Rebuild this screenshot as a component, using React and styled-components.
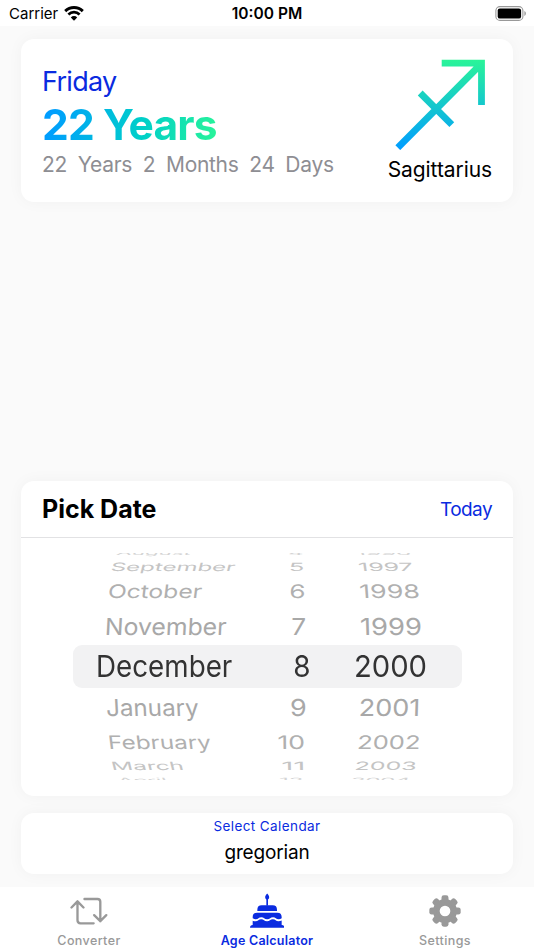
import React from "react";
import styled, { createGlobalStyle } from "styled-components";

const BLUE = "#0a2be0";

const GlobalStyle = createGlobalStyle`
  * { box-sizing: border-box; }
  body { margin: 0; background: #fafafa; }
`;

const Screen = styled.div`
  width: 534px;
  height: 950px;
  display: flex;
  flex-direction: column;
  overflow: hidden;
  background: #fafafa;
  color: #000;
  font-family: Inter, "Liberation Sans", sans-serif;
  white-space: nowrap;
`;

const StatusBar = styled.header`
  flex: none;
  height: 26px;
  padding: 2px 7px 0 9px;
  display: grid;
  grid-template-columns: 1fr auto 1fr;
  align-items: center;
  background: #fff;
  font-size: 15px;
  line-height: 24px;
`;

const Carrier = styled.div`
  display: flex;
  align-items: center;
  gap: 6px;
  svg { display: block; margin-top: -2px; }
`;

const Clock = styled.div`
  padding-right: 2px;
  font-size: 15.5px;
  font-weight: 600;
`;

const BatterySlot = styled.div`
  display: flex;
  justify-content: flex-end;
  svg { display: block; margin-top: -2px; }
`;

const Content = styled.main`
  flex: 1;
  min-height: 0;
  padding: 13px 21px 13px;
  display: flex;
  flex-direction: column;
`;

const Card = styled.section`
  flex: none;
  background: #fff;
  border-radius: 13px;
  box-shadow: 0 0 16px rgba(0, 0, 0, 0.04);
`;

const AgeCard = styled(Card)`
  height: 163px;
  padding: 20px 21px 0;
  display: flex;
  justify-content: space-between;
`;

const AgeInfo = styled.div`
  padding-top: 5px;
`;

const Weekday = styled.div`
  font-size: 27px;
  line-height: 36px;
  letter-spacing: -0.7px;
  color: ${BLUE};
`;

const AgeYears = styled.div`
  width: max-content;
  font-size: 42.5px;
  font-weight: 700;
  line-height: 50px;
  letter-spacing: -0.85px;
  color: transparent;
  background: linear-gradient(100deg, #009dff 5%, #00d0c8 58%, #2af598 100%);
  background-clip: text;
  -webkit-background-clip: text;
`;

const AgeDetail = styled.div`
  display: flex;
  gap: 10.7px;
  font-size: 21px;
  line-height: 30px;
  letter-spacing: -0.3px;
  color: #8e8e93;
`;

const Zodiac = styled.div`
  display: flex;
  flex-direction: column;
  align-items: center;
  svg { display: block; margin-left: 1px; }
`;

const ZodiacName = styled.div`
  font-size: 21px;
  line-height: 39px;
  letter-spacing: -0.08px;
`;

const PickerCard = styled(Card)`
  margin-top: auto;
  height: 315.5px;
`;

const PickerHeader = styled.div`
  height: 57px;
  padding: 1px 21px 0;
  display: flex;
  align-items: center;
  justify-content: space-between;
  border-bottom: 1px solid #e2e2e4;
`;

const PickerTitle = styled.h2`
  margin: 0;
  font-size: 25px;
  font-weight: 700;
`;

const TodayButton = styled.button`
  border: 0;
  padding: 1px 0 0;
  background: none;
  font: 400 19px Inter, sans-serif;
  letter-spacing: -0.6px;
  color: ${BLUE};
`;

const Wheel = styled.div`
  width: 389px;
  height: 227.5px;
  margin: 15px 0 0 51.5px;
  display: flex;
  flex-direction: column;
  justify-content: center;
  overflow: hidden;
`;

const WheelRow = styled.div`
  flex: none;
  height: ${(p) => p.$height}px;
  display: grid;
  grid-template-columns: 164.5px 74px 150.5px;
  grid-template-rows: 100%;
  border-radius: 9px;
  background: ${(p) => (p.$selected ? "#f2f2f3" : "transparent")};
  color: ${(p) => p.$color};
`;

const WheelCell = styled.div`
  display: flex;
  align-items: center;
  justify-content: ${(p) => (p.$end ? "flex-end" : "flex-start")};
  padding: ${(p) => (p.$end ? `0 ${p.$inset}px 0 0` : `0 0 0 ${p.$inset}px`)};
  min-width: 0;
`;

const WheelText = styled.span`
  font-size: 30px;
  line-height: 36px;
  transform-origin: ${(p) => (p.$end ? "right" : "left")} center;
  transform: skewX(${(p) => p.$skew}deg) scale(${(p) => p.$sx}, ${(p) => p.$sy});
`;

const CalendarCard = styled(Card)`
  margin-top: 17px;
  height: 60.5px;
  display: flex;
  flex-direction: column;
  align-items: center;
`;

const CalendarLabel = styled.div`
  font-size: 13.5px;
  line-height: 26px;
  letter-spacing: 0.4px;
  color: ${BLUE};
`;

const CalendarValue = styled.div`
  font-size: 19px;
  line-height: 28px;
  letter-spacing: -0.15px;
`;

const TabBar = styled.nav`
  flex: none;
  height: 63.5px;
  display: grid;
  grid-template-columns: repeat(3, 1fr);
  background: #fff;
`;

const Tab = styled.div`
  display: flex;
  flex-direction: column;
  align-items: center;
  color: ${(p) => (p.$active ? BLUE : "#999")};
  font-size: 12.5px;
  font-weight: ${(p) => (p.$active ? 600 : 500)};
  line-height: 19px;
  letter-spacing: ${(p) => (p.$active ? 0.25 : 0.4)}px;
`;

const TabIcon = styled.div`
  height: 44.5px;
  padding-top: 4.5px;
  display: flex;
  align-items: center;
  svg { display: block; }
`;

const rows = [
  { height: 10, sy: 0.19, skew: 30, color: "#d4d4d4", cells: [["August", 44, 0.74], ["4", 8, 0.78], ["1996", 50.5, 0.81]] },
  { height: 17, sy: 0.38, skew: 14, color: "#c4c4c4", cells: [["September", 38.5, 0.8], ["5", 6.5, 0.85], ["1997", 49, 0.83]] },
  { height: 32, sy: 0.62, skew: 7, color: "#b0b0b0", cells: [["October", 35, 0.82], ["6", 5.5, 0.87], ["1998", 42, 0.895]] },
  { height: 37.5, sy: 0.78, skew: 3, color: "#a8a8a8", cells: [["November", 32, 0.826], ["7", 5, 0.87], ["1999", 39.5, 0.913]] },
  { height: 43.5, sy: 1, skew: 0, color: "#333", selected: true, cells: [["December", 23.5, 0.926], ["8", 0.5, 0.93], ["2000", 34.5, 0.975]] },
  { height: 37.5, sy: 0.78, skew: -3, color: "#a8a8a8", cells: [["January", 33, 0.806], ["9", 4.5, 0.9], ["2001", 41, 0.9]] },
  { height: 32, sy: 0.62, skew: -7, color: "#b0b0b0", cells: [["February", 35, 0.81], ["10", 5.5, 0.89], ["2002", 41.5, 0.85]] },
  { height: 17, sy: 0.38, skew: -14, color: "#c4c4c4", cells: [["March", 38.5, 0.81], ["11", 6, 0.98], ["2003", 45, 0.83]] },
  { height: 10, sy: 0.19, skew: -30, color: "#d4d4d4", cells: [["April", 45, 0.75], ["12", 8, 0.8], ["2004", 51, 0.79]] },
];

// Columns lean towards the centre of the drum as rows move away from the selection.
const lean = [-1, -0.1, 0.6];

const WifiIcon = () => (
  <svg width="20" height="15" viewBox="0 0 20 15" fill="none" stroke="#000">
    <path d="M1.2 5.1a12.6 12.6 0 0 1 17.6 0" strokeWidth="2.9" />
    <path d="M4.4 8.5a8 8 0 0 1 11.2 0" strokeWidth="2.7" />
    <path d="M10 14.8 6.800 11.400a4.500 4.500 0 0 1 6.400 0Z" fill="#000" stroke="none" />
  </svg>
);

const BatteryIcon = () => (
  <svg width="32" height="15" viewBox="0 0 32 15">
    <rect x="0.9" y="0.6" width="27" height="13.8" rx="4" fill="none" stroke="#999" strokeWidth="1.1" />
    <rect x="2.7" y="2.4" width="23.4" height="10.2" rx="2.2" />
    <path d="M29.4 5.1c2 .8 2 4 0 4.8Z" fill="#999" />
  </svg>
);

const SagittariusIcon = () => (
  <svg width="91" height="91" viewBox="0 0 91 91" fill="none" stroke="url(#zodiac)">
    <defs>
      <linearGradient id="zodiac" gradientUnits="userSpaceOnUse" x1="0" y1="0" x2="0" y2="90">
        <stop offset="0" stopColor="#2af598" />
        <stop offset="1" stopColor="#009dff" />
      </linearGradient>
    </defs>
    <path d="M46.7 4.1H86.5V46M2.8 88.7 86.5 4.5M25.2 34l31.6 31.6" strokeWidth="6.8" />
  </svg>
);

const ConvertIcon = () => (
  <svg width="37.3" height="28.7" viewBox="210 290 112 86" fill="none" stroke="currentColor" strokeWidth="7" strokeLinecap="round" strokeLinejoin="round">
    <path d="M214.5 321.5 232.5 303l18 18.500M232.500 304v56q0 9 9 9h39.500" />
    <path d="M253.500 296h39q8.500 0 8.500 8.500v58M282.500 344.500l18.500 18 18-18" />
  </svg>
);

const CakeIcon = () => (
  <svg width="34.7" height="35.3" viewBox="748 280 104 106" fill="currentColor">
    <path d="M799.5 281.5c4 5 6 7 6 11 0 5-3 7-6 7s-6-2-6-7c0-4 2-6 6-11Z" />
    <path d="M797 297h5v21h-5Z" />
    <path d="M770 334v-4q0-13 13-13h33q13 0 13 13v4Z" />
    <path d="M756 356v-4q0-13 13-13h61q13 0 13 13v4c-3 2-6 3-9 3-8 0-9-6-17-6s-9 6-17.5 6-9.5-6-17.5-6-9 6-17 6c-3 0-6-1-8.5-3Z" />
    <path d="M756 376v-13c2.5 1.5 5 2 8.5 2 8 0 9-6 17-6s9 6 17.5 6 9.5-6 17.5-6 9 6 17 6c3.5 0 6.5-1 9.5-2.5V376q8 0 8 8H748q0-8 8-8Z" />
  </svg>
);

const GearIcon = () => (
  <svg width="32" height="32" viewBox="494.5 284 96 96" fill="none" stroke="currentColor">
    <circle cx="542.5" cy="332" r="26" strokeWidth="20" />
    {[0, 45, 90, 135, 180, 225, 270, 315].map((angle) => (
      <rect key={angle} x="532" y="285" width="21" height="22" rx="7" fill="currentColor" stroke="none" transform={`rotate(${angle} 542.5 332)`} />
    ))}
  </svg>
);

export default function App() {
  return (
    <>
      <GlobalStyle />
      <Screen>
        <StatusBar>
          <Carrier>Carrier<WifiIcon /></Carrier>
          <Clock>10:00 PM</Clock>
          <BatterySlot><BatteryIcon /></BatterySlot>
        </StatusBar>
        <Content>
          <AgeCard>
            <AgeInfo>
              <Weekday>Friday</Weekday>
              <AgeYears>22 Years</AgeYears>
              <AgeDetail>
                {["22", "Years", "2", "Months", "24", "Days"].map((part, i) => (
                  <span key={i}>{part}</span>
                ))}
              </AgeDetail>
            </AgeInfo>
            <Zodiac>
              <SagittariusIcon />
              <ZodiacName>Sagittarius</ZodiacName>
            </Zodiac>
          </AgeCard>
          <PickerCard>
            <PickerHeader>
              <PickerTitle>Pick Date</PickerTitle>
              <TodayButton>Today</TodayButton>
            </PickerHeader>
            <Wheel>
              {rows.map((row, r) => (
                <WheelRow key={r} $height={row.height} $selected={row.selected} $color={row.color}>
                  {row.cells.map(([text, inset, sx], c) => (
                    <WheelCell key={c} $end={c > 0} $inset={inset}>
                      <WheelText $end={c > 0} $sx={sx} $sy={row.sy} $skew={row.skew * lean[c]}>{text}</WheelText>
                    </WheelCell>
                  ))}
                </WheelRow>
              ))}
            </Wheel>
          </PickerCard>
          <CalendarCard>
            <CalendarLabel>Select Calendar</CalendarLabel>
            <CalendarValue>gregorian</CalendarValue>
          </CalendarCard>
        </Content>
        <TabBar>
          <Tab><TabIcon><ConvertIcon /></TabIcon>Converter</Tab>
          <Tab $active><TabIcon><CakeIcon /></TabIcon>Age Calculator</Tab>
          <Tab><TabIcon><GearIcon /></TabIcon>Settings</Tab>
        </TabBar>
      </Screen>
    </>
  );
}
